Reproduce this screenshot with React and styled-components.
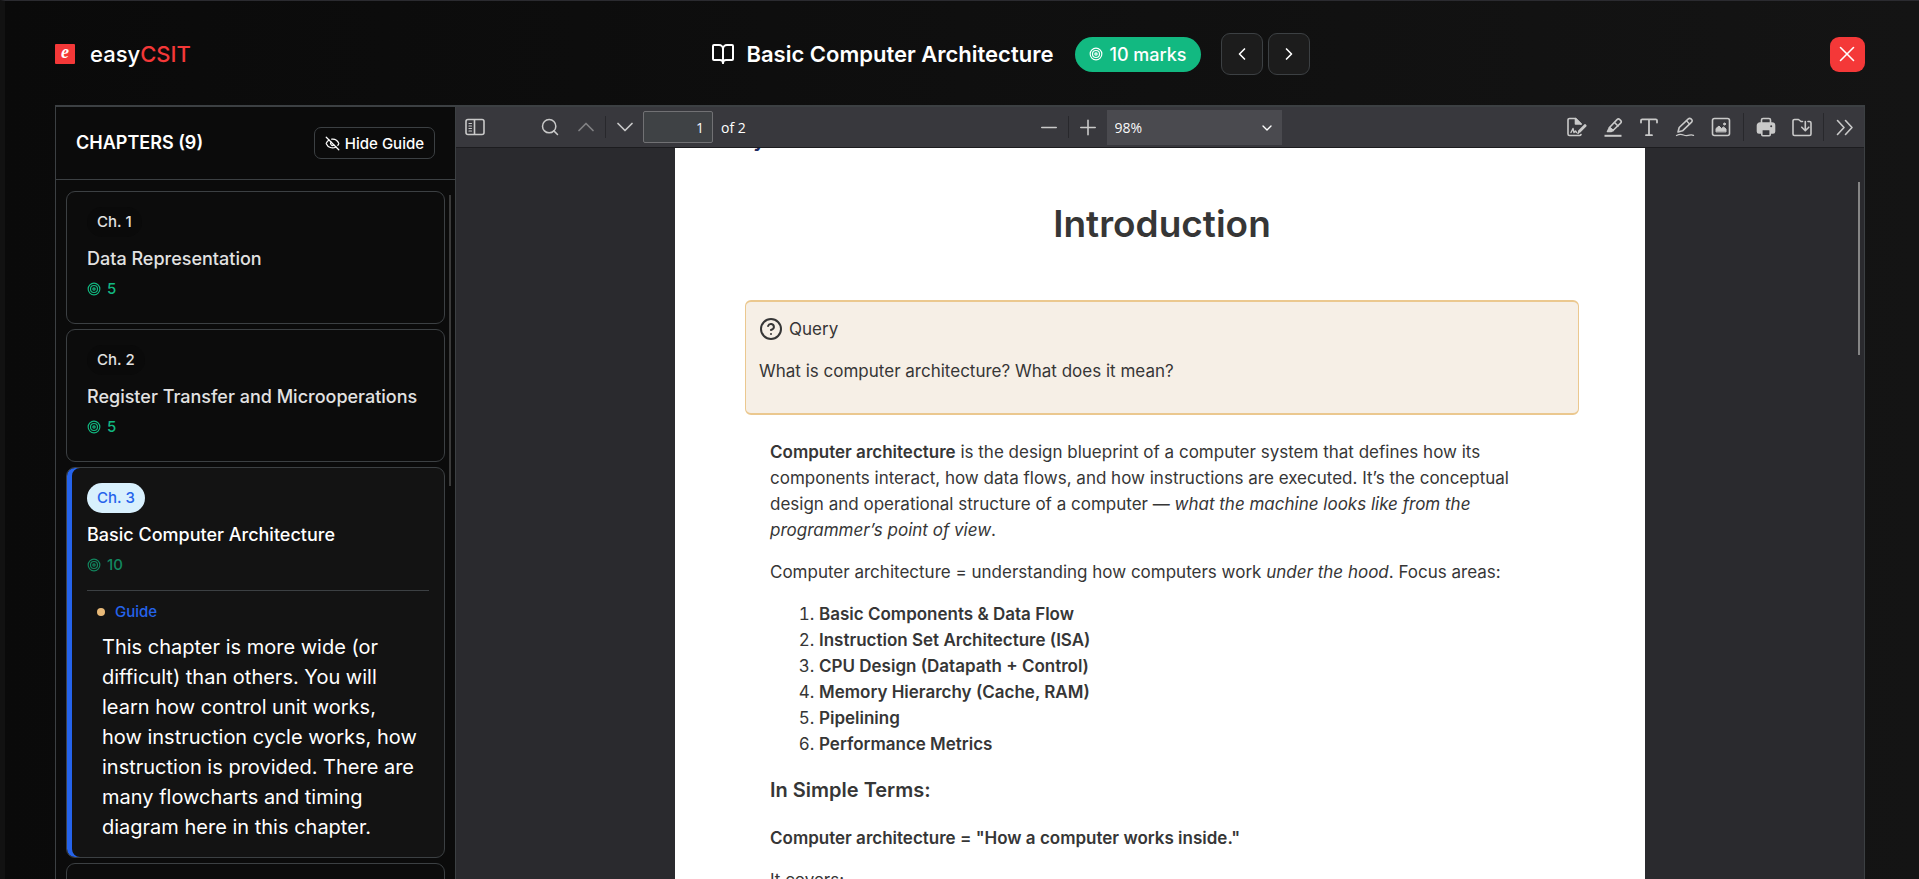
import React, { useState } from 'react';
import styled, { createGlobalStyle } from 'styled-components';
import {
  BookOpen,
  ChevronDown,
  ChevronLeft,
  ChevronRight,
  ChevronUp,
  CircleHelp,
  EyeOff,
  Search,
  Target,
  X,
} from 'lucide-react';


const GlobalStyle = createGlobalStyle`
  * {
    box-sizing: border-box;
  }
  body {
    margin: 0;
    background: #0a0a0a;
    font-family: 'Inter', sans-serif;
    color: #fff;
  }
  button, input, select {
    font-family: inherit;
    color: inherit;
  }
  h1, h2, h3, h4, p, ul, ol {
    margin: 0;
    padding: 0;
  }
`

const Screen = styled.div`
  height: 100vh;
  display: flex;
  flex-direction: column;
  padding: 0 54px 0 50px;
  border-top: 1px solid #2b2b30;
  border-left: 5px solid #121212;
  background: linear-gradient(to right, #0a0a0a, #141414);
  overflow: hidden;
`

const Header = styled.header`
  display: flex;
  align-items: center;
  justify-content: space-between;
  height: 104px;
  padding-top: 2px;
  flex-shrink: 0;
`

const Brand = styled.a`
  display: flex;
  align-items: center;
  gap: 15px;
  min-width: 136px;
  color: #fff;
  font-size: 22px;
  font-weight: 500;
  line-height: 28px;
  text-decoration: none;
  em {
    font-style: normal;
    color: #f43838;
  }
`

const Logo = styled.span`
  flex-shrink: 0;
  width: 20px;
  height: 20px;
  border-radius: 1px;
  background: #f43838;
  font-family: 'Liberation Serif', serif;
  font-size: 18px;
  font-style: italic;
  font-weight: 700;
  line-height: 17px;
  text-align: center;
`

const ChapterBar = styled.div`
  display: flex;
  align-items: center;
  h1 {
    margin: 0 22px 0 11px;
    font-size: 22px;
    font-weight: 600;
    line-height: 28px;
  }
`

const Badge = styled.span`
  display: flex;
  align-items: center;
  gap: 6px;
  height: 35px;
  margin-right: 20px;
  padding: 0 14px;
  border-radius: 18px;
  background: #12b981;
  font-size: 18px;
  font-weight: 500;
`

const StepButton = styled.button`
  display: flex;
  align-items: center;
  justify-content: center;
  width: 42px;
  height: 42px;
  padding: 0;
  border: 1px solid #3c4043;
  border-radius: 9px;
  background: #1c1c1c;
  & + & {
    margin-left: 5px;
  }
`

const CloseButton = styled.button`
  display: flex;
  align-items: center;
  justify-content: center;
  width: 35px;
  height: 35px;
  padding: 0;
  border: 0;
  border-radius: 9px;
  background: #f43838;
`

const Frame = styled.main`
  flex: 1;
  min-height: 0;
  display: flex;
  border: 1px solid #3c4043;
  border-top-width: 2px;
  border-bottom: 0;
`

const Sidebar = styled.aside`
  position: relative;
  width: 400px;
  flex-shrink: 0;
  display: flex;
  flex-direction: column;
  border-right: 1px solid #3c4043;
  background: #0b0b0b;
`

const SidebarHead = styled.div`
  display: flex;
  align-items: center;
  justify-content: space-between;
  height: 73px;
  flex-shrink: 0;
  padding: 0 20px;
  border-bottom: 1px solid #3c4043;
  h2 {
    font-size: 18px;
    font-weight: 600;
    line-height: 24px;
  }
`

const GuideToggle = styled.button`
  display: flex;
  align-items: center;
  gap: 5px;
  height: 32px;
  padding: 0 10px;
  border: 1px solid #3c4043;
  border-radius: 7px;
  background: transparent;
  font-size: 15px;
  font-weight: 500;
`

const ChapterList = styled.ul`
  flex: 1;
  min-height: 0;
  overflow: hidden;
  display: flex;
  flex-direction: column;
  gap: 5px;
  padding: 11px 10px;
  list-style: none;
`

const ChapterCard = styled.li`
  flex-shrink: 0;
  padding: 15px 15px 15px 20px;
  border: 1px solid #3c4043;
  border-radius: 9px;
  background: ${props => (props.$active ? '#131313' : '#0c0c0c')};
  box-shadow: ${props => (props.$active ? 'inset 5px 0 0 #2563eb' : 'none')};
  h3 {
    margin: 8px 0 6px;
    color: ${props => (props.$active ? '#fff' : '#e2e2e2')};
    font-size: 18px;
    font-weight: 500;
    line-height: 27px;
  }
`

const ChapterTag = styled.span`
  display: block;
  width: fit-content;
  padding: 0 10px;
  border-radius: 15px;
  background: ${props => (props.$active ? '#d8f0fd' : '#0a0a0a')};
  color: ${props => (props.$active ? '#2563eb' : '#e2e2e2')};
  font-size: 15px;
  font-weight: 500;
  line-height: 30px;
`

const Marks = styled.div`
  display: flex;
  align-items: center;
  gap: 6px;
  margin-bottom: 8px;
  color: ${props => (props.$active ? '#12875f' : '#12b981')};
  font-size: 15px;
  font-weight: 500;
  line-height: 22px;
`

const Guide = styled.div`
  margin-top: 14px;
  border-top: 1px solid #3c4043;
  h4 {
    display: flex;
    align-items: center;
    gap: 10px;
    padding: 10px 10px 9px;
    color: #2563eb;
    font-size: 15px;
    font-weight: 500;
    line-height: 22px;
  }
  h4::before {
    content: '';
    width: 8px;
    height: 8px;
    border-radius: 50%;
    background: #e8b978;
  }
  p {
    padding: 0 11px 0 15px;
    font-size: 20px;
    line-height: 30px;
  }
`

const ScrollThumb = styled.div`
  position: absolute;
  top: ${props => props.$top}px;
  right: 4px;
  width: 2px;
  height: ${props => props.$size}px;
  background: ${props => props.$color};
`

const Viewer = styled.section`
  position: relative;
  flex: 1;
  min-width: 0;
  display: flex;
  flex-direction: column;
  background: #2a2a2e;
`

const Toolbar = styled.div`
  display: grid;
  grid-template-columns: 1fr auto 1fr;
  height: 41px;
  flex-shrink: 0;
  border-bottom: 1px solid #1c1c1f;
  background: #38383d;
  font-family: 'Open Sans', sans-serif;
  font-size: 14px;
`

const ToolGroup = styled.div`
  display: flex;
  align-items: center;
  gap: ${props => props.$gap || 0}px;
`

const LeftTools = styled(ToolGroup)`
  padding-left: 5px;
`

const ZoomTools = styled(ToolGroup)`
  padding-right: 4px;
`

const RightTools = styled(ToolGroup)`
  justify-content: flex-end;
  padding-right: 5px;
`

const FindTools = styled(ToolGroup)`
  margin-left: 47px;
`

const ToolButton = styled.button`
  display: flex;
  align-items: center;
  justify-content: center;
  width: 28px;
  height: 28px;
  padding: 0;
  border: 0;
  background: transparent;
  color: #c9c9c9;
  opacity: ${props => (props.disabled ? 0.5 : 1)};
`

const Separator = styled.span`
  width: 1px;
  height: ${props => props.$size || 22}px;
  margin: 0 ${props => props.$space || 5}px;
  background: #28282c;
`

const PageInput = styled.input`
  width: 70px;
  height: 32px;
  margin: 0 8px 0 4px;
  padding: 0 8px;
  border: 1px solid #717174;
  border-radius: 2px;
  background: #3f4245;
  color: #f9f9fa;
  font-size: 14px;
  text-align: right;
`

const ZoomBox = styled.div`
  position: relative;
  margin-left: 5px;
  select {
    display: block;
    width: 175px;
    height: 35px;
    padding: 0 8px;
    border: 0;
    border-radius: 0;
    appearance: none;
    background: #4a4a4f;
    color: #f9f9fa;
    font-size: 14px;
  }
  svg {
    position: absolute;
    top: 10px;
    right: 7px;
    pointer-events: none;
  }
`

const PageArea = styled.div`
  flex: 1;
  min-height: 0;
  overflow: hidden;
  display: flex;
  justify-content: center;
  align-items: flex-start;
`

const Page = styled.article`
  width: 970px;
  padding: 0 66px 0 70px;
  background: #fff;
  color: #363636;
  font-size: 17px;
  line-height: 26px;
  h2 {
    margin-top: 49px;
    font-size: 37px;
    font-weight: 600;
    line-height: 46px;
    text-align: center;
  }
`

const Letterhead = styled.div`
  display: flex;
  justify-content: space-between;
  margin: -19px -23px 0;
  font-size: 18px;
  font-weight: 700;
  line-height: 23px;
  color: #1d2c5e;
  em {
    font-style: normal;
    color: #c2401f;
  }
  small {
    color: #555;
    font-size: 15px;
    font-weight: 400;
  }
`

const QueryBox = styled.div`
  margin-top: 53px;
  padding: 14px 13px 29px;
  border: 1px solid #ebc88f;
  border-width: 2px 1px;
  border-radius: 6px;
  background: #f6efe6;
  div {
    display: flex;
    align-items: center;
    gap: 6px;
    margin-bottom: 16px;
  }
`

const Notes = styled.div`
  padding: 0 60px 0 25px;
  margin-top: 24px;
  p + p {
    margin-top: 16px;
  }
  b {
    font-weight: 600;
  }
  ol {
    margin: 16px 0 20px;
    padding-left: 49px;
  }
  li {
    line-height: 26px;
  }
  h3 {
    margin-bottom: 22px;
    font-size: 20px;
    font-weight: 600;
    line-height: 26px;
  }
`

// pdf toolbar glyphs share one 20px box
const ToolIcon = ({ children }) => (
  <svg width='20' height='20' viewBox='0 0 20 20' fill='none' stroke='currentColor'
    strokeWidth='1.6' strokeLinecap='round' strokeLinejoin='round' aria-hidden='true'>
    {children}
  </svg>
)

const PanelIcon = () => (
  <ToolIcon>
    <rect x='1' y='2.5' width='18' height='15' rx='2' />
    <path d='M9.5 3v14' />
    <path d='M4 6.5h2.5M4 9h2.5M4 11.5h2.5M4 14h2.5' strokeWidth='1.2' />
  </ToolIcon>
)

const MinusIcon = () => <ToolIcon><path d='M2.8 10.5h14.4' /></ToolIcon>

const PlusIcon = () => <ToolIcon><path d='M2.8 10.5h14.4M10 3.3v14.4' /></ToolIcon>

const SignIcon = () => (
  <ToolIcon>
    <path d='M14 17.5a2 2 0 0 1-1.5 1H2.5A1.5 1.5 0 0 1 1 17V3a1.5 1.5 0 0 1 1.5-1.5h6L14 7' />
    <path d='M8.5 1.5V7H14z' fill='currentColor' />
    <path d='M4 15.5l2-4 1 4L8.5 14l1 1.5' strokeWidth='1.4' />
    <path d='M12.5 14.2L18 8.7' strokeWidth='3' />
    <path d='M11.6 15.4l-.6 1' />
  </ToolIcon>
)

const HighlightIcon = () => (
  <ToolIcon>
    <path d='M6.5 10.5L14 2.6a2 2 0 0 1 2.8 0l.8.8a2 2 0 0 1 0 2.8L10 13.5z' />
    <path d='M6.5 10.5l-2 4H8l2-1z' fill='currentColor' />
    <path d='M11.5 5.5L15 9' />
    <path d='M1.5 18.8h17' strokeWidth='2' strokeLinecap='butt' />
  </ToolIcon>
)

const TextIcon = () => (
  <ToolIcon>
    <path d='M2 5.5v-2a1.2 1.2 0 0 1 1.2-1.2h13.6A1.2 1.2 0 0 1 18 3.5v2M10 2.5V18M7 18.2h6' strokeWidth='1.8' />
  </ToolIcon>
)

const DrawIcon = () => (
  <ToolIcon>
    <path d='M3 15l1.2-4.5 9.1-8.6a1.9 1.9 0 0 1 2.7 0l.6.6a1.9 1.9 0 0 1 0 2.7l-9.1 8.6z' />
    <path d='M11.5 3.8l3 3.2' strokeWidth='1.3' />
    <path d='M1.5 18.5c3-1.5 4.5-1.5 7-.5s4.500.6 6 .2 2.500-.4 4 .2' strokeWidth='1.3' />
  </ToolIcon>
)

const ImageIcon = () => (
  <ToolIcon>
    <rect x='1.5' y='1.5' width='17' height='17' rx='2' />
    <path d='M5 14.5v-3L8 9l2.5 2.5 2-1.5 2.5 2v2.5z' fill='currentColor' strokeWidth='1' />
    <circle cx='13.5' cy='7' r='1' fill='currentColor' strokeWidth='1' />
  </ToolIcon>
)

const PrintIcon = () => (
  <ToolIcon>
    <path d='M5.5 7V3A1.5 1.5 0 0 1 7 1.5h6A1.5 1.5 0 0 1 14.5 3v4' />
    <path d='M5 16H3a1.5 1.5 0 0 1-1.5-1.5v-6A2.5 2.5 0 0 1 4 6h12a2.5 2.5 0 0 1 2.5 2.5v6A1.5 1.5 0 0 1 17 16h-2z' fill='currentColor' />
    <rect x='5.8' y='12.5' width='8.4' height='6.2' rx='1' fill='#38383d' />
    <circle cx='15.2' cy='9.3' r='1' fill='#38383d' stroke='none' />
  </ToolIcon>
)

const SaveIcon = () => (
  <ToolIcon>
    <path d='M16 4.5h1.5A1.5 1.5 0 0 1 19 6v11a1.5 1.5 0 0 1-1.5 1.5h-15A1.5 1.5 0 0 1 1 17V4a1.5 1.5 0 0 1 1.5-1.5h4L9 4.5h1.5' />
    <path d='M13.3 4.5v9M9.8 10.2l3.5 3.5 3.5-3.5' />
  </ToolIcon>
)

const MoreIcon = () => (
  <ToolIcon><path d='M2.5 3.5l6.5 7-6.5 7M10.5 3.5l6.5 7-6.5 7' /></ToolIcon>
)

const chapters = [
  { id: 1, title: 'Data Representation', marks: 5 },
  { id: 2, title: 'Register Transfer and Microoperations', marks: 5 },
  {
    id: 3,
    title: 'Basic Computer Architecture',
    marks: 10,
    guide: 'This chapter is more wide (or difficult) than others. You will learn how control unit works, how instruction cycle works, how instruction is provided. There are many flowcharts and timing diagram here in this chapter.',
  },
  { id: 4, title: 'Microprogrammed Control', marks: 5 },
]

const focusAreas = [
  'Basic Components & Data Flow',
  'Instruction Set Architecture (ISA)',
  'CPU Design (Datapath + Control)',
  'Memory Hierarchy (Cache, RAM)',
  'Pipelining',
  'Performance Metrics',
]

const Chapter = ({ chapter, active, guideShown }) => (
  <ChapterCard $active={active}>
    <ChapterTag $active={active}>Ch. {chapter.id}</ChapterTag>
    <h3>{chapter.title}</h3>
    <Marks $active={active}>
      <Target size={14} />
      {chapter.marks}
    </Marks>
    {active && guideShown && (
      <Guide>
        <h4>Guide</h4>
        <p>{chapter.guide}</p>
      </Guide>
    )}
  </ChapterCard>
)

const PdfToolbar = () => (
  <Toolbar>
    <LeftTools>
      <ToolButton aria-label='Toggle Sidebar'><PanelIcon /></ToolButton>
      <FindTools $gap={8}>
        <ToolButton aria-label='Find'><Search size={20} strokeWidth={1.8} /></ToolButton>
        <ToolButton aria-label='Previous Page' disabled><ChevronUp size={28} strokeWidth={1.5} /></ToolButton>
      </FindTools>
      <Separator />
      <ToolButton aria-label='Next Page'><ChevronDown size={28} strokeWidth={1.5} /></ToolButton>
      <PageInput id='page' aria-label='Page' defaultValue='1' />
      <label htmlFor='page'>of 2</label>
    </LeftTools>
    <ZoomTools>
      <ToolButton aria-label='Zoom Out'><MinusIcon /></ToolButton>
      <Separator />
      <ToolButton aria-label='Zoom In'><PlusIcon /></ToolButton>
      <ZoomBox>
        <select aria-label='Zoom' defaultValue='98'>
          <option value='98'>98%</option>
          <option value='100'>100%</option>
        </select>
        <ChevronDown size={16} />
      </ZoomBox>
    </ZoomTools>
    <RightTools>
      <ToolGroup $gap={8}>
        <ToolButton aria-label='Add signature'><SignIcon /></ToolButton>
        <ToolButton aria-label='Highlight'><HighlightIcon /></ToolButton>
        <ToolButton aria-label='Text'><TextIcon /></ToolButton>
        <ToolButton aria-label='Draw'><DrawIcon /></ToolButton>
        <ToolButton aria-label='Add image'><ImageIcon /></ToolButton>
      </ToolGroup>
      <Separator $size={28} $space={8} />
      <ToolGroup $gap={8}>
        <ToolButton aria-label='Print'><PrintIcon /></ToolButton>
        <ToolButton aria-label='Save'><SaveIcon /></ToolButton>
      </ToolGroup>
      <Separator $size={28} $space={7} />
      <ToolButton aria-label='Tools'><MoreIcon /></ToolButton>
    </RightTools>
  </Toolbar>
)

const PdfPage = () => (
  <Page>
    <Letterhead>
      <span>easy<em>CSIT</em></span>
      <small>1 of 2</small>
    </Letterhead>
    <h2>Introduction</h2>
    <QueryBox>
      <div>
        <CircleHelp size={24} />
        Query
      </div>
      <p>What is computer architecture? What does it mean?</p>
    </QueryBox>
    <Notes>
      <p>
        <b>Computer architecture</b> is the design blueprint of a computer system that defines how its
        components interact, how data flows, and how instructions are executed. It’s the conceptual
        design and operational structure of a computer — <i>what the machine looks like from the
        programmer’s point of view</i>.
      </p>
      <p>
        Computer architecture = understanding how computers work <i>under the hood</i>. Focus areas:
      </p>
      <ol>
        {focusAreas.map(area => <li key={area}><b>{area}</b></li>)}
      </ol>
      <h3>In Simple Terms:</h3>
      <p><b>Computer architecture = "How a computer works inside."</b></p>
      <p>It covers:</p>
    </Notes>
  </Page>
)

const App = () => {
  const [guideShown, setGuideShown] = useState(true)
  return (
    <Screen>
      <GlobalStyle />
      <Header>
        <Brand href='#'>
          <Logo>e</Logo>
          <span>easy<em>CSIT</em></span>
        </Brand>
        <ChapterBar>
          <BookOpen size={24} />
          <h1>Basic Computer Architecture</h1>
          <Badge><Target size={14} />10 marks</Badge>
          <StepButton aria-label='Previous chapter'><ChevronLeft size={20} /></StepButton>
          <StepButton aria-label='Next chapter'><ChevronRight size={20} /></StepButton>
        </ChapterBar>
        <CloseButton aria-label='Close'><X size={26} strokeWidth={1.5} /></CloseButton>
      </Header>
      <Frame>
        <Sidebar>
          <SidebarHead>
            <h2>CHAPTERS (9)</h2>
            <GuideToggle onClick={() => setGuideShown(!guideShown)}>
              <EyeOff size={15} />
              {guideShown ? 'Hide Guide' : 'Show Guide'}
            </GuideToggle>
          </SidebarHead>
          <ChapterList>
            {chapters.map(chapter => (
              <Chapter
                key={chapter.id}
                chapter={chapter}
                active={chapter.id === 3}
                guideShown={guideShown}
              />
            ))}
          </ChapterList>
          <ScrollThumb $top={88} $size={291} $color='#3a3a3a' />
        </Sidebar>
        <Viewer>
          <PdfToolbar />
          <PageArea>
            <PdfPage />
          </PageArea>
          <ScrollThumb $top={75} $size={173} $color='#858585' />
        </Viewer>
      </Frame>
    </Screen>
  )
}

export default App;
